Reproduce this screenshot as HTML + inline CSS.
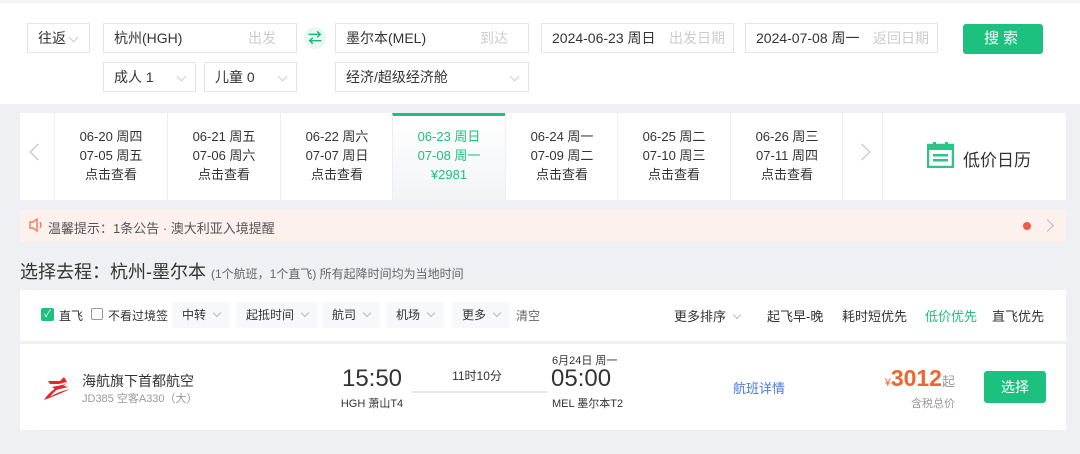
<!DOCTYPE html>
<html><head><meta charset="utf-8"><style>
*{box-sizing:border-box;margin:0;padding:0}
body{width:1080px;height:454px;background:#eef0f3;font-family:"Liberation Sans","Noto Sans CJK SC",sans-serif;color:#333;position:relative;overflow:hidden}
.a{position:absolute}
.box{position:absolute;border:1px solid #e2e4e8;background:#fff;font-size:14px;line-height:28px;padding-left:10px;color:#333}
.ph{position:absolute;right:20px;top:0;color:#ccc}
.chev{position:absolute;right:10px;top:10px;width:7px;height:7px;border-right:1px solid #ccc;border-bottom:1px solid #ccc;transform:rotate(45deg)}
.cell{position:absolute;top:113px;height:87px;width:113px;border-left:1px solid #eceef1;text-align:center;font-size:13px;line-height:19px;padding-top:14px;color:#333}
.fb{position:absolute;top:302px;height:26px;line-height:26px;font-size:12px;color:#333;background:#f7f8fa;padding:0 10px;border-radius:2px}
.fb i{display:inline-block;width:6px;height:6px;border-right:1px solid #bbb;border-bottom:1px solid #bbb;transform:rotate(45deg);margin-left:8px;position:relative;top:-3px}
</style></head><body>
<div class="a" style="left:0;top:0;width:1080px;height:104px;background:#fff;border-top:3px solid #f3f4f6"></div>
<div class="box" style="left:27px;top:23px;width:63px;height:30px">往返<span class="chev" style="right:12px"></span></div>
<div class="box" style="left:103px;top:23px;width:194px;height:30px">杭州(HGH)<span class="ph">出发</span></div>
<div class="a" style="left:304px;top:27px;width:22px;height:22px;border-radius:50%;background:#e8f8f1;color:#19b97a;font-size:14px;line-height:22px;text-align:center;font-weight:bold">⇄</div>
<div class="box" style="left:335px;top:23px;width:194px;height:30px">墨尔本(MEL)<span class="ph">到达</span></div>
<div class="box" style="left:541px;top:23px;width:193px;height:30px">2024-06-23 周日<span class="ph" style="right:8px">出发日期</span></div>
<div class="box" style="left:745px;top:23px;width:193px;height:30px">2024-07-08 周一<span class="ph" style="right:8px">返回日期</span></div>
<div class="a" style="left:963px;top:24px;width:80px;height:30px;background:#1cc07f;color:#fff;border-radius:3px;text-align:center;line-height:30px;font-size:15px;letter-spacing:4px">搜索</div>
<div class="box" style="left:103px;top:62px;width:93px;height:30px">成人 1<span class="chev"></span></div>
<div class="box" style="left:204px;top:62px;width:93px;height:30px">儿童 0<span class="chev"></span></div>
<div class="box" style="left:335px;top:62px;width:194px;height:30px">经济/超级经济舱<span class="chev"></span></div>

<div class="a" style="left:20px;top:113px;width:1046px;height:87px;background:#fff"></div>
<div class="a" style="left:32px;top:146px;width:12px;height:12px;border-left:1.5px solid #bbb;border-bottom:1.5px solid #bbb;transform:rotate(45deg)"></div>
<div class="cell" style="left:54px">06-20 周四<br>07-05 周五<br>点击查看</div>
<div class="cell" style="left:167px">06-21 周五<br>07-06 周六<br>点击查看</div>
<div class="cell" style="left:280px">06-22 周六<br>07-07 周日<br>点击查看</div>
<div class="cell" style="left:392px;border-top:3px solid #1cc07f;padding-top:11px;color:#1cc07f;background:linear-gradient(#fff,#f2f4f6)">06-23 周日<br>07-08 周一<br>¥2981</div>
<div class="cell" style="left:505px">06-24 周一<br>07-09 周二<br>点击查看</div>
<div class="cell" style="left:617px">06-25 周二<br>07-10 周三<br>点击查看</div>
<div class="cell" style="left:730px">06-26 周三<br>07-11 周四<br>点击查看</div>
<div class="cell" style="left:842px;width:40px"></div>
<div class="a" style="left:856px;top:146px;width:12px;height:12px;border-right:1.5px solid #bbb;border-top:1.5px solid #bbb;transform:rotate(45deg)"></div>
<div class="a" style="left:882px;top:113px;height:87px;border-left:1px solid #eceef1"></div>
<svg class="a" style="left:927px;top:142px" width="27" height="26" viewBox="0 0 27 26"><rect x="1" y="3" width="25" height="22" fill="none" stroke="#2cc488" stroke-width="2.5"/><rect x="1" y="3" width="25" height="5" fill="#2cc488"/><rect x="6" y="0" width="3" height="5" fill="#2cc488"/><rect x="18" y="0" width="3" height="5" fill="#2cc488"/><rect x="6" y="12" width="15" height="2.5" fill="#2cc488"/><rect x="6" y="17" width="15" height="2.5" fill="#2cc488"/></svg>
<div class="a" style="left:963px;top:146px;font-size:17px;color:#333">低价日历</div>

<div class="a" style="left:20px;top:210px;width:1046px;height:32px;background:#fdf1ee;border-radius:3px"></div>
<svg class="a" style="left:29px;top:218px" width="15" height="14" viewBox="0 0 15 14"><path d="M1 4h3l4-3v12l-4-3H1z" fill="none" stroke="#f07c5a" stroke-width="1.4"/><path d="M11 4q2 3 0 6" fill="none" stroke="#f07c5a" stroke-width="1.4"/></svg>
<div class="a" style="left:48px;top:218px;font-size:13px;color:#555">温馨提示：1条公告 · 澳大利亚入境提醒</div>
<div class="a" style="left:1023px;top:222px;width:8px;height:8px;border-radius:50%;background:#f05a4a"></div>
<div class="a" style="left:1043px;top:221px;width:9px;height:9px;border-right:1.3px solid #bbb;border-top:1.3px solid #bbb;transform:rotate(45deg)"></div>

<div class="a" style="left:20px;top:258px;font-size:18px;color:#333">选择去程：杭州-墨尔本 <span style="font-size:12px;color:#666">(1个航班，1个直飞) 所有起降时间均为当地时间</span></div>

<div class="a" style="left:20px;top:290px;width:1046px;height:51px;background:#fff"></div>
<div class="a" style="left:41px;top:308px;width:13px;height:13px;background:#1cc07f;border-radius:2px;color:#fff;font-size:10px;line-height:13px;text-align:center">✓</div>
<div class="a" style="left:59px;top:307px;font-size:12px">直飞</div>
<div class="a" style="left:91px;top:308px;width:12px;height:12px;border:1px solid #999;border-radius:2px"></div>
<div class="a" style="left:108px;top:307px;font-size:12px">不看过境签</div>
<div class="fb" style="left:172px">中转<i></i></div>
<div class="fb" style="left:236px">起抵时间<i></i></div>
<div class="fb" style="left:322px">航司<i></i></div>
<div class="fb" style="left:386px">机场<i></i></div>
<div class="fb" style="left:452px">更多<i></i></div>
<div class="a" style="left:516px;top:307px;font-size:12px;color:#666">清空</div>
<div class="a" style="left:674px;top:306px;font-size:13px">更多排序<i style="display:inline-block;width:6px;height:6px;border-right:1px solid #bbb;border-bottom:1px solid #bbb;transform:rotate(45deg);margin-left:8px;position:relative;top:-3px"></i></div>
<div class="a" style="left:767px;top:306px;font-size:13px">起飞早-晚</div>
<div class="a" style="left:842px;top:306px;font-size:13px">耗时短优先</div>
<div class="a" style="left:925px;top:306px;font-size:13px;color:#1cc07f">低价优先</div>
<div class="a" style="left:980px;top:306px;font-size:13px;width:64px;text-align:right">直飞优先</div>

<div class="a" style="left:20px;top:344px;width:1046px;height:86px;background:#fff"></div>
<svg class="a" style="left:40px;top:373px" width="34" height="28" viewBox="0 0 34 28"><path d="M4 27C10 18 16 14 28 10 20 14 14 18 10 24 16 20 22 18 30 16 22 20 12 24 4 27z" fill="#e5252a"/><path d="M8 8h12l4-4 3 5-8 2h-9z" fill="#e5252a"/><path d="M12 14l10-2 6 2-12 3z" fill="#e5252a"/></svg>
<div class="a" style="left:82px;top:371px;font-size:14px">海航旗下首都航空</div>
<div class="a" style="left:82px;top:390px;font-size:11px;color:#999">JD385 空客A330（大）</div>
<div class="a" style="left:330px;top:365px;width:84px;text-align:center;font-size:24px">15:50</div>
<div class="a" style="left:330px;top:395px;width:84px;text-align:center;font-size:11px">HGH 萧山T4</div>
<div class="a" style="left:412px;top:367px;width:130px;text-align:center;font-size:12px">11时10分</div>
<div class="a" style="left:412px;top:391px;width:135px;height:2px;background:#e4e6ea"></div>
<div class="a" style="left:552px;top:352px;font-size:11px">6月24日 周一</div>
<div class="a" style="left:551px;top:365px;font-size:24px">05:00</div>
<div class="a" style="left:552px;top:395px;font-size:11px">MEL 墨尔本T2</div>
<div class="a" style="left:733px;top:378px;font-size:13px;color:#4a7bd9">航班详情</div>
<div class="a" style="left:878px;top:365px;font-size:23px;color:#f0642f;font-weight:bold;width:77px;text-align:right"><span style="font-size:11px;font-weight:normal">¥</span>3012<span style="font-size:13px;font-weight:normal;color:#999">起</span></div>
<div class="a" style="left:911px;top:395px;font-size:11px;color:#999">含税总价</div>
<div class="a" style="left:984px;top:371px;width:62px;height:32px;background:#1cc07f;color:#fff;border-radius:3px;text-align:center;line-height:32px;font-size:14px">选择</div>
</body></html>
